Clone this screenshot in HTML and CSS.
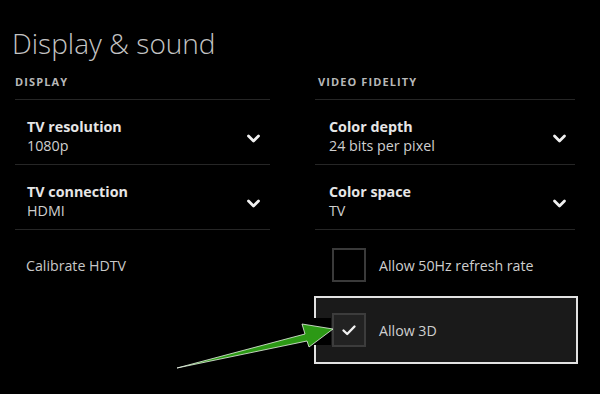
FILE: index.html
```html
<!DOCTYPE html>
<html lang="en">
<head>
    <meta charset="UTF-8">
    <meta name="viewport" content="width=device-width, initial-scale=1.0">
    <title>Display &amp; sound</title>
    <link rel="stylesheet" href="styles.css">
</head>
<body>
    <main class="screen">
        <h1 class="page-title">Display &amp; sound</h1>

        <div class="columns">
            <!-- Display -->
            <section class="column column-left">
                <h2 class="section-label">DISPLAY</h2>
                <ul class="settings">
                    <li class="setting dropdown">
                        <div class="setting-text">
                            <span class="setting-name">TV resolution</span>
                            <span class="setting-value">1080p</span>
                        </div>
                        <svg class="chevron" viewBox="0 0 14 10"><path d="M2 2 L7 7 L12 2"/></svg>
                    </li>
                    <li class="setting dropdown">
                        <div class="setting-text">
                            <span class="setting-name">TV connection</span>
                            <span class="setting-value">HDMI</span>
                        </div>
                        <svg class="chevron" viewBox="0 0 14 10"><path d="M2 2 L7 7 L12 2"/></svg>
                    </li>
                    <li class="setting link">Calibrate HDTV</li>
                </ul>
            </section>

            <!-- Video fidelity -->
            <section class="column column-right">
                <h2 class="section-label">VIDEO FIDELITY</h2>
                <ul class="settings">
                    <li class="setting dropdown">
                        <div class="setting-text">
                            <span class="setting-name">Color depth</span>
                            <span class="setting-value">24 bits per pixel</span>
                        </div>
                        <svg class="chevron" viewBox="0 0 14 10"><path d="M2 2 L7 7 L12 2"/></svg>
                    </li>
                    <li class="setting dropdown">
                        <div class="setting-text">
                            <span class="setting-name">Color space</span>
                            <span class="setting-value">TV</span>
                        </div>
                        <svg class="chevron" viewBox="0 0 14 10"><path d="M2 2 L7 7 L12 2"/></svg>
                    </li>
                    <li class="setting toggle">
                        <span class="checkbox"></span>
                        <span class="toggle-label">Allow 50Hz refresh rate</span>
                    </li>
                    <li class="setting toggle focused">
                        <span class="checkbox checked">
                            <svg viewBox="0 0 16 16"><path d="M2.5 8.5 L6.2 12 L13.5 4.5"/></svg>
                        </span>
                        <span class="toggle-label">Allow 3D</span>
                    </li>
                </ul>
            </section>
        </div>

        <!-- Pointer arrow drawn over the screen -->
        <svg class="pointer-arrow" viewBox="0 0 600 394">
            <rect x="305" y="318" width="26" height="27" fill="#000"/>
            <polygon points="177,368 305,334 302,324 333,329 309,347 307,341" />
        </svg>
    </main>
</body>
</html>
```

FILE: styles.css
```css
/* Reset some default styles */
body, h1, h2, ul {
    margin: 0;
    padding: 0;
}

body {
    background-color: #000;
    color: #d6d6d6;
    font-family: "Open Sans", "Noto Sans", sans-serif;
}

.screen {
    position: relative;
    width: 600px;
    height: 394px;
    padding: 0 15px;
    box-sizing: border-box;
    overflow: hidden;
}

.page-title {
    margin-top: 26px;
    font-size: 28px;
    line-height: 34px;
    font-weight: 300;
    color: #c4c4c4;
    margin-left: -3px;
}

/* Two setting columns */
.columns {
    display: grid;
    grid-template-columns: 255px 260px;
    column-gap: 45px;
}

.section-label {
    padding: 15px 0 10px;
    font-size: 11px;
    line-height: 14px;
    font-weight: 700;
    letter-spacing: 1.1px;
    color: #b8b8b8;
    border-bottom: 1px solid #262626;
}

.column-right .section-label {
    padding-left: 3px;
}

.settings {
    list-style: none;
}

/* Dropdown rows */
.dropdown {
    display: flex;
    align-items: center;
    justify-content: space-between;
    height: 65px;
    box-sizing: border-box;
    padding: 17px 9px 9px 12px;
    border-bottom: 1px solid #262626;
}

.column-right .dropdown {
    padding-left: 14px;
    padding-right: 8px;
}

.setting-text {
    display: flex;
    flex-direction: column;
}

.setting-name {
    font-size: 14.3px;
    line-height: 20px;
    font-weight: 700;
    color: #e6e6e6;
}

.setting-value {
    font-size: 14.3px;
    line-height: 18px;
    color: #cfcfcf;
}

.chevron {
    width: 15px;
    height: 10px;
    margin-top: 5px;
    fill: none;
    stroke: #f0f0f0;
    stroke-width: 2.8;
    stroke-linecap: round;
    stroke-linejoin: round;
}

/* Plain link row */
.link {
    padding: 26px 0 0 11px;
    font-size: 14.2px;
    line-height: 20px;
    color: #c8c8c8;
}

/* Checkbox rows */
.toggle {
    display: flex;
    align-items: center;
    gap: 13px;
    padding: 18px 0 14px 17px;
    font-size: 14.2px;
    color: #cfcfcf;
}

.checkbox {
    width: 34px;
    height: 34px;
    box-sizing: border-box;
    border: 2px solid #3a3a3a;
    display: flex;
    align-items: center;
    justify-content: center;
}

.focused {
    margin: 0 -3px 0 -1px;
    padding: 15px 0 15px 16px;
    border: 2px solid #e2e2e2;
    background-color: #1a1a1a;
}

.checked {
    border-color: #3c3c3c;
    background-color: #222;
}

.checked svg {
    width: 16px;
    height: 16px;
    fill: none;
    stroke: #f2f2f2;
    stroke-width: 2.4;
    stroke-linecap: round;
    stroke-linejoin: round;
}

.pointer-arrow {
    position: absolute;
    top: 0;
    left: 0;
    width: 600px;
    height: 394px;
    pointer-events: none;
}

.pointer-arrow polygon {
    fill: #2c9915;
    stroke: #e8f3e4;
    stroke-width: 0.8;
    stroke-linejoin: miter;
}
```
